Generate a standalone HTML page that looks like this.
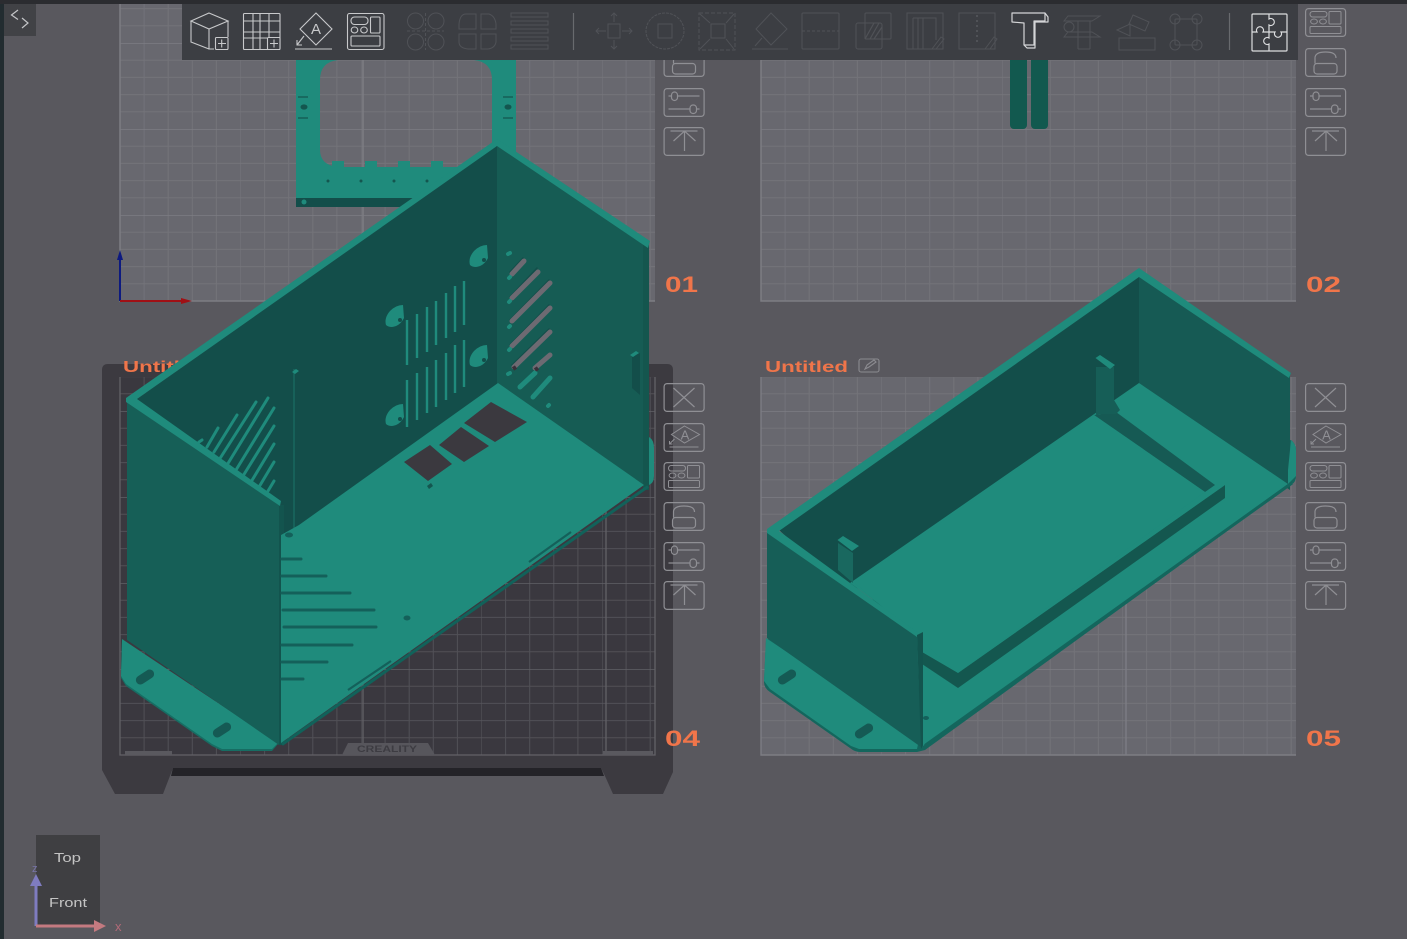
<!DOCTYPE html>
<html><head><meta charset="utf-8"><title>Plates</title>
<style>html,body{margin:0;padding:0;background:#59585e;overflow:hidden}svg{display:block}text{font-family:"Liberation Sans",sans-serif}</style></head>
<body>
<svg xmlns="http://www.w3.org/2000/svg" width="1407" height="939" viewBox="0 0 1407 939">
<defs>
<g id="cell" fill="none">
<path d="M24.1 0V86M48.2 0V86M72.3 0V86M96.4 0V86M0 17.2H120.5M0 34.4H120.5M0 51.6H120.5M0 68.8H120.5" stroke="#737379" stroke-width="1"/>
<path d="M0 0V86" stroke="#76767c" stroke-width="1"/><path d="M0 0H120.5" stroke="#7c7c83" stroke-width="1.4"/>
</g>
<g id="celld" fill="none">
<path d="M24.1 0V86M48.2 0V86M72.3 0V86M96.4 0V86M0 17.2H120.5M0 34.4H120.5M0 51.6H120.5M0 68.8H120.5" stroke="#515056" stroke-width="1"/>
<path d="M0 0V86" stroke="#58575d" stroke-width="1"/><path d="M0 0H120.5" stroke="#605f65" stroke-width="1.4"/>
</g>
<pattern id="p1" patternUnits="userSpaceOnUse" x="120" y="43" width="120.5" height="86"><use href="#cell"/></pattern>
<pattern id="p2" patternUnits="userSpaceOnUse" x="761" y="43" width="120.5" height="86"><use href="#cell"/></pattern>
<pattern id="p4" patternUnits="userSpaceOnUse" x="120" y="325" width="120.5" height="86"><use href="#celld"/></pattern>
<pattern id="p5" patternUnits="userSpaceOnUse" x="761" y="325" width="120.5" height="86"><use href="#cell"/></pattern>
<g id="b-x" fill="none"><rect x=".6" y=".6" width="40" height="27.8" rx="3"/><path d="M10 5L31 24M31 5L10 24"/></g>
<g id="b-a" fill="none"><rect x=".6" y=".6" width="40" height="27.8" rx="3"/><path d="M21 3L36 11.500L21 20L8 11.500ZM6 24H35M11 16L6 21M6 18V21H9" stroke-width="1"/><text x="21.500" y="16.500" font-size="13" text-anchor="middle" fill="#8f8f94" stroke="none">A</text></g>
<g id="b-l" fill="none"><rect x=".6" y=".6" width="40" height="27.8" rx="3"/><rect x="5" y="3.500" width="17" height="5.500" rx="2.700" stroke-width="1"/><rect x="24" y="3.500" width="12" height="12.500" rx="1" stroke-width="1"/><rect x="5" y="18.500" width="31" height="7" rx="1" stroke-width="1"/><ellipse cx="9" cy="13.500" rx="3.400" ry="2.500" stroke-width="1"/><ellipse cx="18" cy="13.500" rx="3.400" ry="2.500" stroke-width="1"/></g>
<g id="b-k" fill="none"><rect x=".6" y=".6" width="40" height="27.8" rx="3"/><rect x="9" y="15.500" width="23" height="10.500" rx="3"/><path d="M10 15.500V10Q10 4 20.500 4Q31 4 31 10"/></g>
<g id="b-s" fill="none"><rect x=".6" y=".6" width="40" height="27.8" rx="3"/><path d="M5 8H8M14 8H36M5 21H26M33 21H36"/><rect x="8" y="4" width="6" height="8.500" rx="3"/><rect x="26.500" y="17" width="6.500" height="8.500" rx="3"/></g>
<g id="b-u" fill="none"><rect x=".6" y=".6" width="40" height="27.8" rx="3"/><path d="M7 4H34M21 24V4M10 14L21 4L32 14"/></g>
</defs>

<!-- background -->
<rect width="1407" height="939" fill="#59585e"/>
<rect x="0" y="0" width="4" height="939" fill="#222c30"/>
<rect x="0" y="0" width="1407" height="4" fill="#2b2c30"/>

<!-- plates -->
<rect x="120" y="4" width="535" height="297" fill="#68686f"/><rect x="120" y="4" width="535" height="297" fill="url(#p1)"/>
<path d="M120 4V301H655M363 4V301" stroke="#7d7d84" fill="none" stroke-width="1.5"/>
<rect x="761" y="4" width="535" height="297" fill="#68686f"/><rect x="761" y="4" width="535" height="297" fill="url(#p2)"/>
<path d="M761 4V301H1296" stroke="#7d7d84" fill="none" stroke-width="1.5"/>

<path d="M108 364H667Q673 364 673 370V772L663 794H613L605 776L601 768H173L163 794H115L102 770V370Q102 364 108 364Z" fill="#3c3a40"/>
<path d="M173 768H601L604 776H171Z" fill="#242328"/>
<rect x="120" y="377" width="535" height="378" fill="#3a383f"/><rect x="120" y="377" width="535" height="378" fill="url(#p4)"/>
<path d="M120 377V755H655V377M363 377V755M606 377V755" stroke="#636267" fill="none" stroke-width="1.3"/>
<path d="M342 755L348 743H428L435 755Z" fill="#57565c"/>
<text x="357" y="752" font-size="9" font-weight="bold" fill="#3d3c42" textLength="60" lengthAdjust="spacingAndGlyphs">CREALITY</text>
<path d="M125 751H172V755H125ZM603 751H653V755H603Z" fill="#5a595f"/>

<rect x="761" y="377" width="535" height="378" fill="#68686f"/><rect x="761" y="377" width="535" height="378" fill="url(#p5)"/>
<path d="M761 377V755H1296M1126 377V755" stroke="#7d7d84" fill="none" stroke-width="1.4"/>

<!-- labels -->
<g font-weight="bold" fill="#f0754a">
<text x="123" y="372" font-size="16" textLength="83" lengthAdjust="spacingAndGlyphs">Untitled</text>
<text x="765" y="372" font-size="16" textLength="83" lengthAdjust="spacingAndGlyphs">Untitled</text>
<text x="665" y="292" font-size="22" textLength="33" lengthAdjust="spacingAndGlyphs">01</text>
<text x="1306" y="292" font-size="22" textLength="35" lengthAdjust="spacingAndGlyphs">02</text>
<text x="665" y="746" font-size="22" textLength="35" lengthAdjust="spacingAndGlyphs">04</text>
<text x="1306" y="746" font-size="22" textLength="35" lengthAdjust="spacingAndGlyphs">05</text>
</g>
<g fill="none" stroke="#8b8b90" stroke-width="1.1"><rect x="859" y="359" width="20" height="13" rx="2"/><path d="M865 369L867 365L874 360L876 362L869 367Z"/></g>

<!-- side buttons -->
<g stroke="#8f8f94" stroke-width="1.2">
<use href="#b-k" x="663.5" y="48"/><use href="#b-s" x="663.5" y="88"/><use href="#b-u" x="663.5" y="127"/>
<use href="#b-x" x="663.5" y="383"/><use href="#b-a" x="663.5" y="423"/><use href="#b-l" x="663.5" y="462"/><use href="#b-k" x="663.5" y="502"/><use href="#b-s" x="663.5" y="542"/><use href="#b-u" x="663.5" y="581"/>
<use href="#b-l" x="1305" y="8"/><use href="#b-k" x="1305" y="48"/><use href="#b-s" x="1305" y="88"/><use href="#b-u" x="1305" y="127"/>
<use href="#b-x" x="1305" y="383"/><use href="#b-a" x="1305" y="423"/><use href="#b-l" x="1305" y="462"/><use href="#b-k" x="1305" y="502"/><use href="#b-s" x="1305" y="542"/><use href="#b-u" x="1305" y="581"/>
</g>

<!-- model on plate 01 -->
<path fill-rule="evenodd" fill="#1f8b7c" d="M296 55H516V207H296ZM320 55V150Q320 165 338 167H474Q492 165 492 150V80Q492 62 474 60H338Q320 62 320 80Z"/>
<path d="M296 198H420V207H296Z" fill="#134e4a"/><circle cx="304" cy="202" r="2.5" fill="#1f8b7c"/>
<path d="M332 161H344V169H332ZM365 161H377V169H365ZM398 161H410V169H398ZM431 161H443V169H431Z" fill="#1f8b7c"/>
<path d="M298 97H308M298 118H308M503 97H513M503 118H513" stroke="#14564f" stroke-width="1.3"/>
<ellipse cx="304" cy="107" rx="3.500" ry="2.600" fill="#14564f"/><ellipse cx="508" cy="107" rx="3.500" ry="2.600" fill="#14564f"/>
<g fill="#14564f"><circle cx="328" cy="181" r="1.5"/><circle cx="361" cy="181" r="1.5"/><circle cx="394" cy="181" r="1.5"/><circle cx="427" cy="181" r="1.5"/></g>

<!-- model on plate 02 -->
<rect x="1010" y="50" width="17" height="79" rx="4" fill="#12594f"/><rect x="1031" y="50" width="17" height="79" rx="4" fill="#12594f"/>

<!-- axis -->
<path d="M120 301V258" stroke="#0d1a80" stroke-width="2"/><path d="M120 250L117 260H123Z" fill="#0d1a80"/>
<path d="M120 301H182" stroke="#a01015" stroke-width="2"/><path d="M192 301L181 298V304Z" fill="#a01015"/>

<!-- BIG MODEL 04 -->
<path d="M649 437Q654 440 654 448V476Q654 483 649 485Z" fill="#1f8b7c"/>
<path d="M122 640L278 744L272 751H222L212 746L126 686L121 678Z" fill="#176d63"/>
<path d="M122 639L278 743L272 749H222L212 744L126 684L121 676Z" fill="#1f8b7c"/>
<g fill="#155a54"><rect x="135" y="672.500" width="20" height="9" rx="4.500" transform="rotate(-33 145 677)"/><rect x="212" y="725.500" width="20" height="9" rx="4.500" transform="rotate(-33 222 730)"/></g>
<path d="M137 399L497 144V392L290 538L281 535V505Z" fill="#134e4a"/>
<path d="M497 144L649 244V490L497 392Z" fill="#165c54"/>
<path d="M646 244V490" stroke="#14564e" stroke-width="6"/>
<path d="M127 399L279 505V745L127 640Z" fill="#165f57"/>
<path d="M279 505H284V745H279Z" fill="#13544e"/>
<path d="M284 505L295 498V528L284 535Z" fill="#134e4a"/>
<path d="M294 369V528" stroke="#1a6e64" stroke-width="1.2"/>
<path d="M292 372L296 369L299 371L295 374Z" fill="#1f8b7c"/>
<!-- floor -->
<path d="M282 744.500L648 486.500" stroke="#11625a" stroke-width="3"/>
<path d="M498 383L644 485L281 743V535L299 525Z" fill="#1f8b7c"/>
<path d="M404 462L430 445L452 464L428 481ZM439 445L461 427L489 446L464 462ZM464 423L491 402L527 422L495 442Z" fill="#3b393f"/>
<path d="M427 486l4-3l2 3l-4 3Z" fill="#14564f"/>
<g stroke="#14605a" stroke-width="3" stroke-linecap="round" fill="none">
<path d="M282 559H301M282 576H326M282 593H350M283 610H374M284 627H376M282 645H352M282 662H327M282 679H303"/>
</g>
<ellipse cx="407" cy="618" rx="3.500" ry="2.500" fill="#14605a"/><ellipse cx="289" cy="535" rx="4" ry="2.500" fill="#14605a"/>
<path d="M529 562L571 532M348 690L391 661" stroke="#14605a" stroke-width="2.200"/>
<!-- rim -->
<path d="M126 398L497 139L650 241L648 248L497 146L137 399L281 501L280 506L126 402Z" fill="#1f8b7c"/>
<!-- left wall vents -->
<g stroke="#1f8b7c" stroke-width="3" fill="none" stroke-linecap="round">
<path d="M218 428L207 447M237 415L214 452M256 402L219 460M268 398L227 465M274 408L236 470M274 426L243 476M274 444L251 482M274 462L259 487M274 481L268 491"/>
<path d="M199 442L202 440"/>
</g>
<!-- back wall vents -->
<g stroke="#1f8b7c" stroke-width="2.400" fill="none">
<path d="M407 320V365M417 314V358M427 307V352M436 301V345M446 293V338M455 286V332M464 281V325"/>
<path d="M407 380V427M417 373V420M427 367V413M436 360V407M446 353V400M455 345V393M464 340V387"/>
</g>
<!-- standoffs -->
<g fill="#1f8b7c">
<path d="M386 325Q384 318 390 311Q396 305 403 305L404 318Q400 326 392 327Q388 327 386 325Z"/>
<path d="M470 265Q468 258 474 251Q480 245 487 245L488 258Q484 266 476 267Q472 267 470 265Z"/>
<path d="M470 365Q468 358 474 351Q480 345 487 345L488 358Q484 366 476 367Q472 367 470 365Z"/>
<path d="M386 424Q384 417 390 410Q396 404 403 404L404 417Q400 425 392 426Q388 426 386 424Z"/>
</g>
<g fill="#134e4a"><circle cx="400" cy="320" r="2"/><circle cx="484" cy="260" r="2"/><circle cx="484" cy="360" r="2"/><circle cx="400" cy="419" r="2"/></g>
<!-- right wall slits -->
<g fill="none" stroke-linecap="round">
<g stroke="#134e4a" stroke-width="1.500"><path d="M510 272L523 258M510 297L537 268M510 320L549 280M510 345L549 305M512 365L549 329"/></g>
<g stroke="#6d6a72" stroke-width="5"><path d="M512 274L524 261M512 298L538 272M512 321L550 283M512 346L550 308M514 367L550 332M535 368L550 355"/></g>
<g stroke="#1f8b7c" stroke-width="4"><path d="M508 254L510 253M509 278L510 277M509 302L510 301M509 327L510 326M509 350L510 349M508 374L510 373M548 406L549 405"/></g>
<g stroke="#1f8b7c" stroke-width="5"><path d="M520 387L535 373M533 397L550 378"/></g>
</g>
<path d="M513 369l3-2M535 370l3-2" stroke="#3a3039" stroke-width="4"/>
<path d="M632 357L640 353V395L632 388Z" fill="#134e4a"/><path d="M630 355L636 351L639 353L633 357Z" fill="#1f8b7c"/>

<!-- MODEL 05 -->
<path d="M1291 440Q1296 444 1296 450V476Q1296 482 1292 484L925 750L917 752H860Q855 752 850 748L770 692Q764 688 764 682L766 640Z" fill="#14665d"/>
<path d="M766 638L919 740L917 749H859L851 746L770 689L764 681Z" fill="#1f8b7c"/>
<g fill="#155a54"><rect x="777" y="672.500" width="20" height="9" rx="4.500" transform="rotate(-33 787 677)"/><rect x="854" y="726.500" width="20" height="9" rx="4.500" transform="rotate(-33 864 731)"/></g>
<path d="M779 530L1139 276V390L855 590H845Z" fill="#134e4a"/>
<path d="M1139 274L1290 376V490L1139 390Z" fill="#165a54"/>
<path d="M1291 440Q1296 444 1296 450V476L1288 484L1288 470Z" fill="#1f8b7c"/>
<path d="M1139 383L1288 484L923 746L915 630L850 583Z" fill="#1f8b7c"/>
<path d="M925 745.500L1292 483" stroke="#14665d" stroke-width="3"/>
<!-- pocket -->
<path d="M1094 415L1116 412L1215 485L1205 492Z" fill="#165a54"/>
<path d="M922 652L958 673L1225 485V498L958 688L922 664Z" fill="#14574f"/>
<path d="M1094 415L1205 492L958 673L855 583Z" fill="#1f8b7c"/>
<path d="M1225 485L1205 492L958 673Z" fill="#1f8b7c"/>
<path d="M1096 415V367L1114 367V400L1120 410L1116 414L1100 414Z" fill="#165e57"/>
<path d="M1095.500 358L1100 355L1115 365L1110 369Z" fill="#1f8b7c"/>
<path d="M838 543L853 553V583L838 570Z" fill="#19685f"/>
<path d="M837.500 540L843 536L859 546L852 551Z" fill="#1f8b7c"/>
<!-- front wall -->
<path d="M767 530L917 635L921 747L767 638Z" fill="#165e57"/>
<path d="M917 635L923 632V745L921 749Z" fill="#13544e"/>
<ellipse cx="926" cy="718" rx="3" ry="2" fill="#14605a"/>
<path d="M767 529L1139 268L1291 373L1289 378L1139 277L779 531L917 632V637L767 533Z" fill="#1f8b7c"/>

<!-- gizmo -->
<rect x="36" y="835" width="64" height="91" fill="#3f3f42"/>
<text x="54" y="862" font-size="13" fill="#c4c4c4" textLength="27" lengthAdjust="spacingAndGlyphs">Top</text>
<text x="49" y="907" font-size="13" fill="#c4c4c4" textLength="38" lengthAdjust="spacingAndGlyphs">Front</text>
<path d="M36 926V884" stroke="#7f7cc0" stroke-width="3"/><path d="M36 874L30 886H42Z" fill="#7f7cc0"/>
<path d="M36 926H96" stroke="#c47a80" stroke-width="3"/><path d="M106 926L94 920V932Z" fill="#c47a80"/>
<text x="32" y="872" font-size="11" fill="#7875a8">z</text>
<text x="115" y="931" font-size="13" fill="#b26a78">x</text>

<!-- top-left button -->
<rect x="4" y="4" width="32" height="32" fill="#414246"/>
<path d="M18 10L11.500 15L18 19.500M22 18L28 23L22 28" fill="none" stroke="#c4c5c8" stroke-width="1.200"/>

<!-- toolbar -->
<rect x="182" y="4" width="1116" height="56" fill="#3c3e43"/>
<g fill="none" stroke="#c8c9cb" stroke-width="1.100">
<path d="M209 13L228 21L209 29L191 21ZM191 21V42L209 49M209 29V49L214 49M228 21V37"/>
<rect x="215.500" y="37.500" width="12.500" height="12" rx="1"/><path d="M218 43.500H226M221.700 39.500V47.500"/>
<rect x="243.500" y="13.500" width="36.500" height="36" rx="1"/><path d="M243 21H280M243 32H280M243 38H267M253 13V49M260 13V49M269 13V37"/>
<rect x="267.500" y="37.500" width="12.500" height="12" rx="1" fill="#3c3e43"/><path d="M270 43.500H278M274 39.500V47.500"/>
<path d="M316 13L332 29L316 45L300 29ZM295 49H332M304 36L297 45M297 40V45H302"/>
<text x="316" y="34" font-size="15" text-anchor="middle" fill="#c8c9cb" stroke="none">A</text>
<rect x="347.500" y="13.500" width="36.500" height="36" rx="2"/><rect x="351" y="17" width="17" height="7.500" rx="3.500"/><rect x="370.500" y="17" width="9.500" height="16" rx="1"/><ellipse cx="354.500" cy="30" rx="3.300" ry="3"/><ellipse cx="364" cy="30" rx="3.300" ry="3"/><rect x="351" y="36" width="29" height="10" rx="1"/>
</g>
<g fill="none" stroke="#505257" stroke-width="1">
<circle cx="415.500" cy="21" r="8"/><circle cx="436" cy="21" r="8"/><circle cx="415.500" cy="42" r="8"/><circle cx="436" cy="42" r="8"/><path d="M425.500 13V50M407 31H444" stroke-dasharray="3 2"/>
<path d="M476 14H466Q460 14 459 24V29H476ZM481 14H489Q495 16 496 24V29H481ZM459 34H476V49H468Q459 48 459 42ZM481 34H496V42Q495 48 488 49H481Z"/>
<path d="M511 13H548V17H511ZM511 21H548V25H511ZM511 29H548V33H511ZM511 37H548V41H511ZM511 45H548V49H511Z"/>
<rect x="608" y="24" width="12" height="14"/><path d="M614 13V22M614 40V49M596 31H606M622 31H632M611 16L614 13L617 16M611 46L614 49L617 46M599 28L596 31L599 34M629 28L632 31L629 34"/>
<rect x="658" y="24" width="14" height="14"/><ellipse cx="665" cy="31" rx="19" ry="18" stroke-dasharray="3 1"/>
<rect x="699" y="13" width="36" height="37" stroke-dasharray="4 2"/><rect x="711" y="24" width="14" height="14"/><path d="M700 14L710 23M734 14L726 23M700 49L710 39M734 49L726 39"/>
<path d="M771 13L787 29L771 45L756 29ZM752 49H788M762 38L755 46"/>
<rect x="802" y="13" width="37" height="36" rx="1"/><path d="M802 31H839" stroke-dasharray="3 2"/>
<rect x="865" y="13" width="26" height="26" rx="1"/><rect x="856" y="23" width="26" height="26" rx="2"/><path d="M865 39L874 23M870 39L879 23M874 39L882 27" stroke-width="1.200"/>
<path d="M907 49V13H943V49ZM913 18V49M918 18V49M923 18V49M913 18H936V40"/><path d="M932 49L941 37L944 39L936 49Z"/>
<path d="M959 49V13H995V49Z"/><path d="M977 15V45" stroke-dasharray="2 3" stroke-width="2"/><path d="M985 49L994 37L997 39L990 49Z"/>
<path d="M1068 16H1100L1092 21H1064ZM1064 37H1100L1092 32H1068ZM1078 21V49M1090 21V49M1078 49H1090"/><circle cx="1069" cy="27" r="5"/>
<path d="M1119 38H1155V50H1119ZM1133 15L1149 22L1145 31L1129 24ZM1117 30L1130 24V36Z"/>
<rect x="1175" y="19" width="22" height="26" rx="1"/><circle cx="1175" cy="19" r="5"/><circle cx="1197" cy="19" r="5"/><circle cx="1175" cy="45" r="5"/><circle cx="1197" cy="45" r="5"/>
</g>
<path d="M573.500 13V50M1229.500 13V50" stroke="#686a6e" stroke-width="1.200"/>
<!-- T icon -->
<g fill="none" stroke="#d4d5d7" stroke-width="1.200" stroke-linejoin="round">
<path d="M1012 13H1045L1048 17V22H1035V48H1027L1024 45V23L1012 22ZM1045 13V21H1034V45H1024"/>
</g>
<!-- puzzle icon -->
<g fill="none" stroke="#dcdddf" stroke-width="1.200">
<rect x="1252" y="14" width="35" height="37" rx="1"/>
<path d="M1269 14V19A3.500 3.500 0 1 1 1269 25V38A3.500 3.500 0 1 0 1269 44V51M1252 32H1257A3.500 3.500 0 1 1 1263 32H1275A3.500 3.500 0 1 0 1281 32H1287"/>
</g>
</svg>
</body></html>
